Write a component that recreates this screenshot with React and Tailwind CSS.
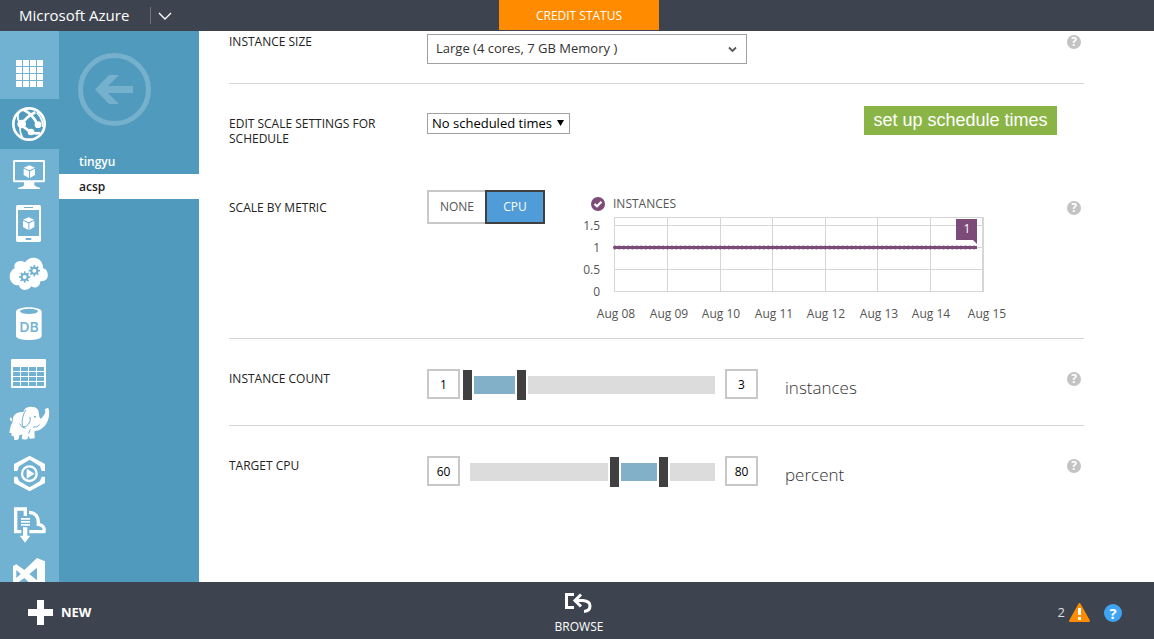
import { useState } from "react";

const LIGHT = "#71b1d1";

function Cube({ x, y }) {
  return (
    <g transform={`translate(${x} ${y})`}>
      <path d="M17 0 L34 7 L17 15 L0 7 Z M0 10 L16 18 V38 L0 29 Z M34 10 L19 18 V38 L34 29 Z" />
    </g>
  );
}

function Gear({ x, y }) {
  return (
    <g transform={`translate(${x} ${y})`} fill="none" stroke={LIGHT}>
      <circle r="9" strokeWidth="6" />
      {[0, 45, 90, 135, 180, 225, 270, 315].map((a) => (
        <path key={a} d="M0 -10 V-17" strokeWidth="5" transform={`rotate(${a})`} />
      ))}
    </g>
  );
}

const steps4 = [0, 1, 2, 3];

const services = [
  {
    name: "All items",
    art: steps4.map((r) =>
      steps4.map((c) => (
        <rect key={`${r}${c}`} x={48 + c * 21} y={33 + r * 21} width="18" height="18" />
      ))
    ),
  },
  {
    name: "Websites",
    active: true,
    art: (
      <g fill="none" stroke="#fff">
        <circle cx="87" cy="75" r="47" strokeWidth="8" />
        <path d="M70 32 Q98 44 112 76 M65 76 Q80 52 106 40 M66 80 L90 98 Q106 106 120 102" strokeWidth="8" />
        <path d="M58 36 Q48 56 60 74 M62 76 Q56 98 68 116 M110 40 Q129 58 128 84" strokeWidth="5" />
        <circle cx="65" cy="75" r="13" fill="#fff" stroke="none" />
        <circle cx="114" cy="77" r="10" fill="#fff" stroke="none" />
        <circle cx="93" cy="99" r="10" fill="#fff" stroke="none" />
      </g>
    ),
  },
  {
    name: "Virtual machines",
    art: (
      <>
        <path
          fillRule="evenodd"
          d="M43 33 H131 Q135 33 135 37 V96 Q135 100 131 100 H103 V109 Q108 115 120 116 V120 H54 V116 Q68 115 72 109 V100 H43 Q39 100 39 96 V37 Q39 33 43 33 Z M45 39 V94 H129 V39 Z"
        />
        <Cube x={71} y={49} />
      </>
    ),
  },
  {
    name: "Mobile services",
    art: (
      <>
        <path
          fillRule="evenodd"
          d="M53 18 H118 Q123 18 123 23 V124 Q123 129 118 129 H53 Q48 129 48 124 V23 Q48 18 53 18 Z M54 33 V111 H117 V33 Z M72 24 V27 H99 V24 Z M77 117 V123 H94 V117 Z"
        />
        <Cube x={69} y={55} />
      </>
    ),
  },
  {
    name: "Cloud services",
    art: (
      <>
        <path d="M44 58 C39 40 58 30 75 40 C84 24 112 20 124 38 Q130 47 129 58 C140 59 145 72 143 84 Q139 97 121 97 C120 115 105 120 94 112 C86 126 62 128 56 108 C43 113 29 99 29 82 Q30 65 44 58 Z" />
        <Gear x={74} y={84} />
        <Gear x={103} y={65} />
      </>
    ),
  },
  {
    name: "SQL databases",
    art: (
      <>
        <path d="M48 38 C48 20 125 20 125 38 V111 C125 127 48 127 48 111 Z" />
        <ellipse cx="87" cy="37" rx="27" ry="8" fill={LIGHT} />
        <text x="87" y="98" textAnchor="middle" fill={LIGHT} fontSize="42" fontWeight="600">
          DB
        </text>
      </>
    ),
  },
  {
    name: "Storage",
    art: (
      <>
        <rect x="33" y="30" width="105" height="87" rx="4" />
        {steps4.map((r) =>
          steps4.map((c) => (
            <rect key={`${r}${c}`} x={39 + c * 24} y={54 + r * 15} width="21" height="12" fill={LIGHT} />
          ))
        )}
      </>
    ),
  },
  {
    name: "HDInsight",
    art: (
      <>
        <path d="M32 82 L28 101 L35 103 L34 110 L41 112 C43 119 43 118 42 122 Q52 124 56 120 L58 109 Q63 109 67 105 L65 119 Q74 124 83 120 L84 110 L90 119 L104 118 C105 110 102 103 104 96 C121 96 136 83 143 66 C149 50 149 34 144 26 L134 31 Q139 39 132 48 Q126 58 120 59 Q117 50 116 38 Q112 24 98 24 Q90 21 78 27 Q73 30 70 39 Q60 38 51 42 Q39 49 38 62 L32 54 L29 62 L37 70 Z" />
        <path
          d="M77 33 C66 53 64 74 69 83 Q77 86 86 75 Q93 67 90 53 M38 61 L35 72 M59 74 Q64 86 77 88 M91 91 L86 104 M99 84 Q111 87 119 77"
          fill="none"
          stroke={LIGHT}
          strokeWidth="3"
        />
        <circle cx="105" cy="53" r="3" fill={LIGHT} />
      </>
    ),
  },
  {
    name: "Media services",
    art: (
      <>
        <path d="M42 66 V45 L89 20 L135 45 V66 H125 L120 52 L89 32 L57 52 L52 66 Z M42 83 V102 L89 127 L135 102 V83 H125 L120 96 L89 115 L57 96 L52 83 Z" />
        <circle cx="88" cy="74" r="22" fill="none" stroke="#fff" strokeWidth="7" />
        <path d="M80 59 V89 L104 74 Z" />
      </>
    ),
  },
  {
    name: "Import and export",
    art: (
      <>
        <path
          d="M64 98 H47 V30 H76 V51 M88 98 H132 Q136 79 115 76 C117 54 106 40 87 40"
          fill="none"
          stroke="#fff"
          strokeWidth="10"
        />
        <path d="M63 57 H90 V62 H63 Z M63 66 H90 V71 H63 Z M63 75 H90 V80 H63 Z M69 85 H82 V110 H91 L75 131 L59 110 H69 Z" />
      </>
    ),
  },
  {
    name: "Visual Studio Online",
    art: (
      <path
        fillRule="evenodd"
        d="M39 51 L49 46 L73 63 L111 27 L135 37 V113 L111 123 L73 87 L49 104 L39 99 Z M49 63 V87 L62 75 Z M111 56 L88 75 L111 94 Z"
      />
    ),
  },
];

function Help() {
  return (
    <button
      type="button"
      aria-label="Help"
      className="mt-px flex size-[14px] items-center justify-center rounded-full bg-[#c3c3c3] text-[12px] leading-[14px] font-bold text-white"
    >
      ?
    </button>
  );
}

function Row({ label, htmlFor, className, labelClass, help = true, children }) {
  return (
    <section className={`grid grid-cols-[198px_1fr_14px] items-start pr-[3px] ${className}`}>
      <label
        htmlFor={htmlFor}
        className={`pr-[40px] text-[12px] leading-[15px] text-[#222] ${labelClass}`}
      >
        {label}
      </label>
      {children}
      {help && (
        <div className={labelClass}>
          <Help />
        </div>
      )}
    </section>
  );
}

const thumbClass =
  "pointer-events-none absolute inset-y-0 right-[6px] left-px h-[30px] appearance-none bg-transparent [&::-webkit-slider-thumb]:pointer-events-auto [&::-webkit-slider-thumb]:h-[30px] [&::-webkit-slider-thumb]:w-[13px] [&::-webkit-slider-thumb]:appearance-none [&::-webkit-slider-thumb]:border-x-2 [&::-webkit-slider-thumb]:border-white [&::-webkit-slider-thumb]:bg-[#404040]";

const boxClass =
  "h-[30px] w-[33px] border-2 border-[#c8c8c8] bg-white text-center text-[12px] text-black outline-none";

function RangeField({ id, min, max, initial, unit }) {
  const [[low, high], setRange] = useState(initial);
  const pct = (v) => ((v - min) / (max - min)) * 100;
  const setLow = (e) => setRange([Math.min(Number(e.target.value), high), high]);
  const setHigh = (e) => setRange([low, Math.max(Number(e.target.value), low)]);
  return (
    <div className="flex h-[30px] items-start">
      <input id={id} className={boxClass} value={low} onChange={setLow} />
      <div className="relative mt-px h-[30px] w-[265px] px-[10px] py-[6px]">
        <div className="relative h-[18px] bg-[#dcdcdc]">
          <div
            className="absolute inset-y-0 bg-[#82b0c9]"
            style={{ left: `${pct(low)}%`, width: `${pct(high) - pct(low)}%` }}
          />
        </div>
        <input type="range" aria-label={`Minimum ${unit}`} min={min} max={max} value={low} onChange={setLow} className={thumbClass} />
        <input type="range" aria-label={`Maximum ${unit}`} min={min} max={max} value={high} onChange={setHigh} className={thumbClass} />
      </div>
      <input aria-label={`Maximum ${unit} value`} className={boxClass} value={high} onChange={setHigh} />
      <span className="mt-[7px] ml-[27px] text-[17px] leading-[24px] font-light text-[#333]">{unit}</span>
    </div>
  );
}

const days = [
  ["Aug 08", 31],
  ["Aug 09", 84],
  ["Aug 10", 136],
  ["Aug 11", 189],
  ["Aug 12", 241],
  ["Aug 13", 294],
  ["Aug 14", 346],
  ["Aug 15", 402],
];

function Chart() {
  return (
    <figure className="ml-[40px]">
      <figcaption className="flex h-[15px] items-center gap-2 pl-[6px] text-[12px] text-[#555]">
        <svg className="size-[14px]" viewBox="0 0 14 14">
          <circle cx="7" cy="7" r="7" fill="#7c4b77" />
          <path d="M3.5 7 L6 9.3 L10.5 4.7" fill="none" stroke="#fff" strokeWidth="2.2" />
        </svg>
        INSTANCES
      </figcaption>
      <svg width="430" height="116" viewBox="0 0 430 116" className="overflow-visible text-[12px]" fill="#555">
        <g fill="none" stroke="#d6d6d6" shapeRendering="crispEdges">
          <path d="M29.5 6.5 H398.5 V80.5 H29.5 Z" />
          <path d="M29 14.5 H398 M29 36.5 H398 M29 58.5 H398" />
          <path d="M82.5 6 V80 M135.5 6 V80 M187.5 6 V80 M240.5 6 V80 M292.5 6 V80 M345.5 6 V80 M397.5 6 V80" />
        </g>
        <path d="M29 36.500 H392" stroke="#7c4b77" strokeWidth="3" />
        <path d="M30 36.500 H392" stroke="#7c4b77" strokeWidth="4" strokeLinecap="round" strokeDasharray="0 4.38" />
        <path d="M371 8 H392 V33 L388 29 H371 Z" fill="#7c4b77" />
        <text x="382" y="22" textAnchor="middle" fill="#fff">1</text>
        <g textAnchor="end">
          <text x="15" y="19">1.5</text>
          <text x="15" y="41">1</text>
          <text x="15" y="63">0.5</text>
          <text x="15" y="85">0</text>
        </g>
        <g textAnchor="middle">
          {days.map(([d, x]) => (
            <text key={d} x={x} y="107">{d}</text>
          ))}
        </g>
      </svg>
    </figure>
  );
}

function MetricToggle() {
  const [metric, setMetric] = useState("CPU");
  return (
    <div className="flex h-[34px] text-[12px]">
      {["NONE", "CPU"].map((m) => (
        <button
          key={m}
          type="button"
          aria-pressed={metric === m}
          onClick={() => setMetric(m)}
          className={
            metric === m
              ? "w-[60px] border-2 border-[#404040] bg-[#4f9cd8] text-white"
              : "w-[58px] border-2 border-r-0 border-[#c8c8c8] bg-white text-[#555]"
          }
        >
          {m}
        </button>
      ))}
    </div>
  );
}

export default function App() {
  return (
    <div className="flex h-screen flex-col overflow-hidden bg-white font-['Open_Sans','Noto_Sans',sans-serif]">
      <header className="grid h-[31px] shrink-0 grid-cols-[1fr_160px_1fr] bg-[#3e444f] pl-[4px] text-white">
        <div className="flex items-center pl-[15px]">
          <span className="w-[131px] text-[15px]">Microsoft Azure</span>
          <button type="button" aria-label="Open menu" className="flex h-[17px] items-center border-l border-[#6b7079] pl-[7px]">
            <svg className="h-[8px] w-[14px]" viewBox="0 0 14 8" fill="none" stroke="#fff" strokeWidth="1.4">
              <path d="M1 1 L7 7 L13 1" />
            </svg>
          </button>
        </div>
        <button type="button" className="h-[30px] bg-[#ff8c00] pt-px text-[12px] text-white">
          CREDIT STATUS
        </button>
      </header>

      <div className="flex min-h-0 flex-1">
        <nav aria-label="Services" className="w-[59px] shrink-0 overflow-hidden bg-[#71b1d1] pt-[18px]">
          {services.map((s) => (
            <a
              key={s.name}
              href="#"
              aria-label={s.name}
              className={s.active ? "block h-[50px] bg-[#509bbd]" : "block h-[50px]"}
            >
              <svg className="h-[50px] w-[59px]" viewBox="0 0 177 150" fill="#fff">
                {s.art}
              </svg>
            </a>
          ))}
        </nav>

        <nav aria-label="Websites" className="w-[140px] shrink-0 bg-[#509bbd] pt-[22px] text-[12px]">
          <button type="button" aria-label="Back" className="mb-[23px] ml-[19px] block">
            <svg className="size-[73px]" viewBox="0 0 73 73">
              <circle cx="36.5" cy="36.5" r="34" fill="none" stroke="#75b0cc" strokeWidth="5" />
              <path d="M17 36.500 L31 22 H41 L30 33 H55 V40 H30 L41 51 H31 Z" fill="#75b0cc" />
            </svg>
          </button>
          <a href="#" className="block h-[25px] pl-5 leading-[26px] font-semibold text-white">
            tingyu
          </a>
          <a href="#" className="block h-[25px] bg-white pl-5 leading-[26px] font-semibold text-[#222]">
            acsp
          </a>
        </nav>

        <main className="min-w-0 flex-1 overflow-hidden pr-[70px] pl-[30px]">
          <Row label="INSTANCE SIZE" htmlFor="size" className="border-b border-[#d6d6d6] pt-[3px] pb-[19px]" labelClass="">
            <div className="relative w-[320px]">
              <select
                id="size"
                className="block h-[30px] w-full appearance-none border border-[#a0a0a0] bg-white pl-2 text-[13px] text-[#333]"
              >
                <option>Large (4 cores, 7 GB Memory )</option>
              </select>
              <svg className="pointer-events-none absolute top-[12px] right-[10px] h-[7px] w-[9px]" viewBox="0 0 9 7" fill="none" stroke="#555" strokeWidth="1.8">
                <path d="M1 1.500 L4.500 5 L8 1.500" />
              </svg>
            </div>
          </Row>

          <Row label="EDIT SCALE SETTINGS FOR SCHEDULE" htmlFor="schedule" className="pt-[22px] pb-[44px]" labelClass="mt-[10px] pr-[20px]" help={false}>
            <div className="flex items-start justify-between pr-[10px]">
              <div className="relative mt-[7px] w-[143px]">
                <select id="schedule" className="block h-[21px] w-full appearance-none border border-[#a0a0a0] bg-white pl-1 text-[13px] text-black">
                  <option>No scheduled times</option>
                </select>
                <svg className="pointer-events-none absolute top-[7px] right-[6px] h-[6px] w-[7px]" viewBox="0 0 7 6">
                  <path d="M0 0 H7 L3.500 6 Z" />
                </svg>
              </div>
              <button type="button" className="h-[29px] w-[193px] bg-[#8ab546] font-['Liberation_Sans',sans-serif] text-[18px] text-white">
                set up schedule times
              </button>
            </div>
          </Row>

          <Row label="SCALE BY METRIC" className="border-b border-[#d6d6d6]" labelClass="mt-[10px]">
            <div className="flex items-start">
              <MetricToggle />
              <div className="pt-[6px] pb-[11px]">
                <Chart />
              </div>
            </div>
          </Row>

          <Row label="INSTANCE COUNT" htmlFor="count" className="border-b border-[#d6d6d6] pt-[30px] pb-[26px]" labelClass="mt-[2px]">
            <RangeField id="count" min={1} max={10} initial={[1, 3]} unit="instances" />
          </Row>

          <Row label="TARGET CPU" htmlFor="cpu" className="pt-[30px]" labelClass="mt-[2px]">
            <RangeField id="cpu" min={0} max={100} initial={[60, 80]} unit="percent" />
          </Row>
        </main>
      </div>

      <footer className="grid h-[57px] shrink-0 grid-cols-[1fr_auto_1fr] items-center bg-[#3e444f] pl-[4px] text-white">
        <button type="button" className="flex items-center gap-2 justify-self-start pt-[4px] pl-[24px] text-[13px] font-bold">
          <svg className="size-[25px]" viewBox="0 0 25 25" fill="#fff">
            <path d="M9 0 H16 V9 H25 V16 H16 V25 H9 V16 H0 V9 H9 Z" />
          </svg>
          NEW
        </button>
        <button type="button" className="flex flex-col items-center gap-[6px] pt-[6px] text-[12px] leading-[15px]">
          <svg className="h-[20px] w-[27px]" viewBox="0 0 27 20" fill="none" stroke="#fff">
            <path d="M9 1.500 H1.500 V14.500 H9" strokeWidth="3" />
            <path d="M16 1.500 L10 7.500 L16 13.500 M11 7.500 H18 Q25 8 25 13 Q25 18 19 18.500" strokeWidth="3" />
          </svg>
          BROWSE
        </button>
        <div className="flex items-center justify-self-end pt-[4px] pr-[32px]">
          <button type="button" className="flex items-center gap-[4px] text-[13px] text-[#ddd]">
            2
            <svg className="h-[19px] w-[21px]" viewBox="0 0 21 19">
              <path d="M10.500 1 L20 18 H1 Z" fill="#ff8c00" stroke="#ff8c00" strokeWidth="2" strokeLinejoin="round" />
              <path d="M9 5 H12 V12 H9 Z M9 14 H12 V17 H9 Z" fill="#fff" />
            </svg>
          </button>
          <button type="button" aria-label="Help" className="ml-[14px] flex size-[18px] items-center justify-center rounded-full bg-[#3fa4f4] text-[15px] leading-[18px] font-bold">
            ?
          </button>
        </div>
      </footer>
    </div>
  );
}
